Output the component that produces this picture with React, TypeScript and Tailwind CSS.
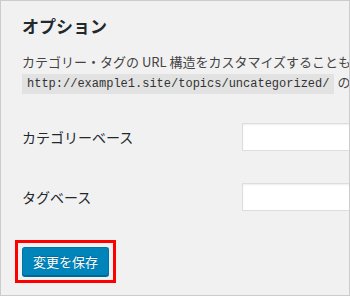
import * as React from "react";

const FieldRow: React.FC<{ label: string; className?: string }> = ({ label, className }) => (
  <div className={`flex items-center h-[28px] ${className ?? ""}`}>
    <label className="w-[220px] shrink-0 text-[14px] leading-[20px] text-[#23282d]">{label}</label>
    <input
      type="text"
      className="w-[220px] h-[28px] shrink-0 bg-white border border-[#ddd] shadow-[inset_0_1px_2px_rgba(0,0,0,0.07)] outline-none px-2 text-[14px]"
    />
  </div>
);

export default function App() {
  return (
    <div className="w-[350px] h-[296px] border border-[#ccc] bg-[#f1f1f1] overflow-hidden pl-[21px] font-['Noto_Sans_CJK_JP',sans-serif] text-[#444]">
      <h2 className="mt-[13px] text-[17px] leading-[24px] font-bold text-[#23282d]">オプション</h2>
      <p className="mt-[14px] text-[13px] leading-[20px] whitespace-nowrap">
        カテゴリー・タグの URL 構造をカスタマイズすることもできます。
      </p>
      <p className="text-[13px] leading-[20px] whitespace-nowrap">
        <code className="inline-block bg-[#e2e2e2] px-[5px] h-[20px] leading-[20px] text-[12px] text-[#333] font-['Liberation_Mono',monospace]">
          http://example1.site/topics/uncategorized/
        </code>{" "}
        のようなリンクに対して
      </p>

      <FieldRow label="カテゴリーベース" className="mt-[29px]" />
      <FieldRow label="タグベース" className="mt-[32px]" />

      <div className="mt-[29px] ml-[-7px] inline-block border-[3px] border-[#f00] p-[4px]">
        <button
          type="button"
          className="block h-[29px] px-[10px] rounded-[3px] bg-[#0085ba] border border-[#0073aa] border-b-[#006799] shadow-[0_1px_0_#006799] text-white text-[13px] leading-[26px] [text-shadow:0_-1px_1px_#006799]"
        >
          変更を保存
        </button>
      </div>
    </div>
  );
}
